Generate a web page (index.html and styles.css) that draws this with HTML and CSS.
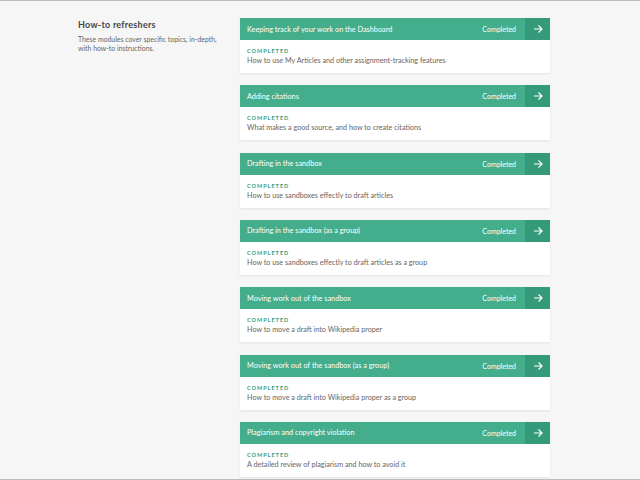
FILE: index.html
```html
<!DOCTYPE html>
<html>
<head>
<meta charset="utf-8">
<link rel="stylesheet" href="styles.css">
</head>
<body>
<div class="page">
  <aside class="intro">
    <h2>How-to refreshers</h2>
    <p>These modules cover specific topics, in-depth, with how-to instructions.</p>
  </aside>
  <div class="modules">
    <div class="card">
      <div class="head"><span class="title">Keeping track of your work on the Dashboard</span><span class="status">Completed</span><span class="go"><svg viewBox="0 0 10 10" width="10" height="10"><path d="M1 5h8M5.5 1.5L9 5l-3.5 3.5" fill="none" stroke="#fff" stroke-width="1.2"/></svg></span></div>
      <div class="body"><div class="label">COMPLETED</div><div class="desc">How to use My Articles and other assignment-tracking features</div></div>
    </div>
    <div class="card">
      <div class="head"><span class="title">Adding citations</span><span class="status">Completed</span><span class="go"><svg viewBox="0 0 10 10" width="10" height="10"><path d="M1 5h8M5.5 1.5L9 5l-3.5 3.5" fill="none" stroke="#fff" stroke-width="1.2"/></svg></span></div>
      <div class="body"><div class="label">COMPLETED</div><div class="desc">What makes a good source, and how to create citations</div></div>
    </div>
    <div class="card">
      <div class="head"><span class="title">Drafting in the sandbox</span><span class="status">Completed</span><span class="go"><svg viewBox="0 0 10 10" width="10" height="10"><path d="M1 5h8M5.5 1.5L9 5l-3.5 3.5" fill="none" stroke="#fff" stroke-width="1.2"/></svg></span></div>
      <div class="body"><div class="label">COMPLETED</div><div class="desc">How to use sandboxes effectly to draft articles</div></div>
    </div>
    <div class="card">
      <div class="head"><span class="title">Drafting in the sandbox (as a group)</span><span class="status">Completed</span><span class="go"><svg viewBox="0 0 10 10" width="10" height="10"><path d="M1 5h8M5.5 1.5L9 5l-3.5 3.5" fill="none" stroke="#fff" stroke-width="1.2"/></svg></span></div>
      <div class="body"><div class="label">COMPLETED</div><div class="desc">How to use sandboxes effectly to draft articles as a group</div></div>
    </div>
    <div class="card">
      <div class="head"><span class="title">Moving work out of the sandbox</span><span class="status">Completed</span><span class="go"><svg viewBox="0 0 10 10" width="10" height="10"><path d="M1 5h8M5.5 1.5L9 5l-3.5 3.5" fill="none" stroke="#fff" stroke-width="1.2"/></svg></span></div>
      <div class="body"><div class="label">COMPLETED</div><div class="desc">How to move a draft into Wikipedia proper</div></div>
    </div>
    <div class="card">
      <div class="head"><span class="title">Moving work out of the sandbox (as a group)</span><span class="status">Completed</span><span class="go"><svg viewBox="0 0 10 10" width="10" height="10"><path d="M1 5h8M5.5 1.5L9 5l-3.5 3.5" fill="none" stroke="#fff" stroke-width="1.2"/></svg></span></div>
      <div class="body"><div class="label">COMPLETED</div><div class="desc">How to move a draft into Wikipedia proper as a group</div></div>
    </div>
    <div class="card">
      <div class="head"><span class="title">Plagiarism and copyright violation</span><span class="status">Completed</span><span class="go"><svg viewBox="0 0 10 10" width="10" height="10"><path d="M1 5h8M5.5 1.5L9 5l-3.5 3.5" fill="none" stroke="#fff" stroke-width="1.2"/></svg></span></div>
      <div class="body"><div class="label">COMPLETED</div><div class="desc">A detailed review of plagiarism and how to avoid it</div></div>
    </div>
  </div>
</div>
</body>
</html>
```

FILE: styles.css
```css
html, body {
  margin: 0;
  padding: 0;
  height: 100%;
  overflow: hidden;
}
body {
  background: #f6f6f6;
  font-family: Lato, "Liberation Sans", sans-serif;
  border-top: 1px solid #bdbdbd;
  box-sizing: border-box;
  position: relative;
}
body::after {
  content: "";
  position: absolute;
  left: 0;
  right: 0;
  bottom: 0;
  height: 1px;
  background: #bdbdbd;
}
.page {
  display: grid;
  grid-template-columns: 162px 310px;
  padding: 17px 0 0 78px;
}
.intro h2 {
  margin: 0;
  font-size: 9px;
  font-weight: 700;
  color: #444;
  letter-spacing: 0.25px;
  line-height: 12px;
  margin-top: 1px;
}
.intro p {
  margin: 4px 0 0;
  font-size: 6.9px;
  line-height: 9px;
  color: #666;
  width: 150px;
}
.card {
  background: #fff;
  margin-bottom: 12.33px;
  box-shadow: 0 1px 2px rgba(0,0,0,0.08);
}
.head {
  display: flex;
  align-items: center;
  height: 22px;
  background: #44ad8b;
  color: #fff;
  font-size: 7.3px;
}
.title {
  flex: 1;
  padding-left: 7px;
}
.status {
  padding-right: 9px;
  font-size: 7px;
}
.go {
  width: 25px;
  height: 22px;
  background: #359a7a;
  display: flex;
  align-items: center;
  justify-content: center;
}
.body {
  height: 33px;
  box-sizing: border-box;
  padding: 7px 7px 0;
}
.label {
  font-size: 5.5px;
  font-weight: 700;
  letter-spacing: 1px;
  color: #3a9a7b;
  line-height: 8px;
}
.desc {
  font-size: 7.2px;
  color: #666;
  line-height: 11px;
}
```
